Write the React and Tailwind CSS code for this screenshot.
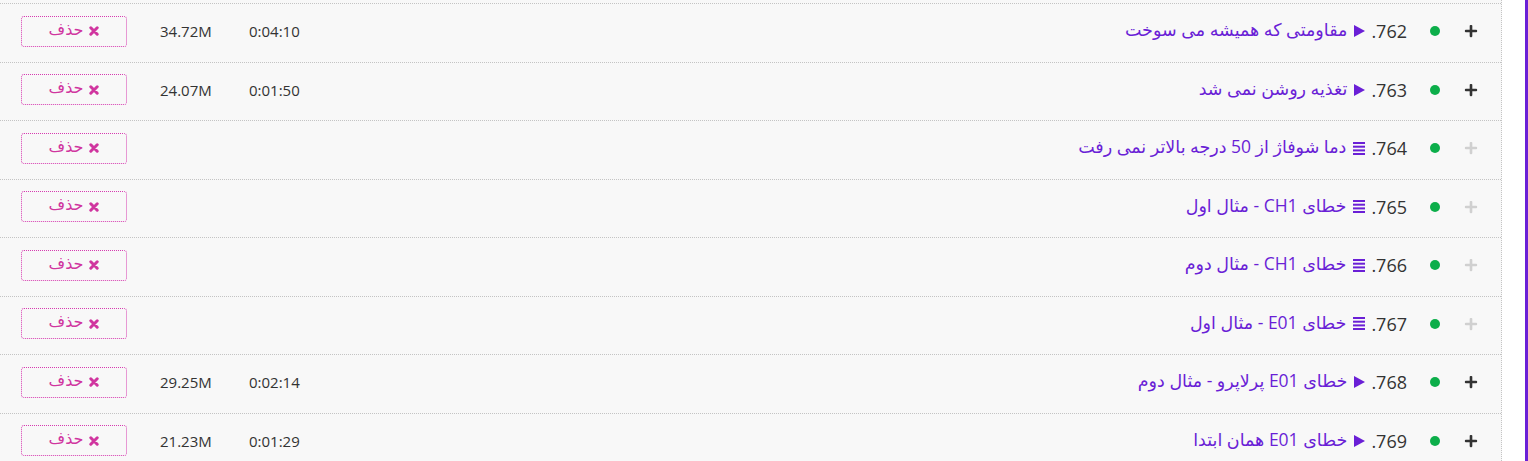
import React from "react";
import { FaPlus } from "react-icons/fa";

const rows = [
  { n: 762, title: "مقاومتی که همیشه می سوخت", type: "video", time: "0:04:10", size: "34.72M" },
  { n: 763, title: "تغذیه روشن نمی شد", type: "video", time: "0:01:50", size: "24.07M" },
  { n: 764, title: "دما شوفاژ از 50 درجه بالاتر نمی رفت", type: "text" },
  { n: 765, title: "خطای CH1 - مثال اول", type: "text" },
  { n: 766, title: "خطای CH1 - مثال دوم", type: "text" },
  { n: 767, title: "خطای E01 - مثال اول", type: "text" },
  { n: 768, title: "خطای E01 پرلاپرو - مثال دوم", type: "video", time: "0:02:14", size: "29.25M" },
  { n: 769, title: "خطای E01 همان ابتدا", type: "video", time: "0:01:29", size: "21.23M" },
];

const PlayIcon = () => (
  <svg width="11" height="12" viewBox="0 0 11 12" className="shrink-0 block">
    <polygon points="0,0 11,6 0,12" fill="#6a1fd6" />
  </svg>
);

const TextIcon = () => (
  <svg width="12" height="13" viewBox="0 0 12 13" className="shrink-0 block">
    <rect x="0" y="0" width="12" height="2" fill="#6a1fd6" />
    <rect x="0" y="3.7" width="12" height="2" fill="#6a1fd6" />
    <rect x="0" y="7.4" width="12" height="2" fill="#6a1fd6" />
    <rect x="0" y="11" width="12" height="2" fill="#6a1fd6" />
  </svg>
);

const XIcon = () => (
  <svg width="10" height="10" viewBox="0 0 10 10" className="shrink-0 block">
    <path d="M1.8 1.8 L8.2 8.2 M8.2 1.8 L1.8 8.2" stroke="#d0359f" strokeWidth="3" strokeLinecap="round" />
  </svg>
);

const Row = ({ item }) => (
  <div className="flex items-center h-[58.5px] border-t border-dotted border-[#c4c4c4] pr-[23px] pb-[3px]">
    {/* right side: expand, status, title */}
    <FaPlus className={`w-[14px] h-[14px] shrink-0 ${item.type === "video" ? "text-[#333]" : "text-[#d0d0d0]"}`} />
    <span className="w-[10px] h-[10px] rounded-full bg-[#0cae4a] mr-[24px] shrink-0" />
    <div className="flex items-center mr-[23px] gap-[4px]">
      <span className="text-[#333] text-[18px] leading-none">{item.n}.</span>
      <span className="mr-[2px]">{item.type === "video" ? <PlayIcon /> : <TextIcon />}</span>
      <span className="text-[#6a1fd6] text-[17.5px] leading-none whitespace-nowrap mr-[3px] -mt-[3px]">{item.title}</span>
    </div>

    <div className="flex-1" />

    {/* left side: meta + delete */}
    {item.time && (
      <span dir="ltr" className="text-[15px] text-[#333] w-[52px] ml-[35px]">{item.time}</span>
    )}
    {item.size && (
      <span dir="ltr" className="text-[15px] text-[#333] w-[54px]">{item.size}</span>
    )}
    <button className="w-[106px] h-[31px] mr-[33px] ml-[21px] border border-dotted border-[#d63ab0] rounded-[3px] flex items-center justify-center gap-[6px] text-[#d0359f] text-[16px]">
      <XIcon />
      <span className="-mt-[5px]">حذف</span>
    </button>
  </div>
);

export default function App() {
  return (
    <div className="w-[1528px] h-[461px] bg-white overflow-hidden flex" style={{ fontFamily: '"Open Sans", "DejaVu Sans", sans-serif' }}>
      <div dir="rtl" className="w-[1502px] h-full bg-[#f8f8f8] border-r border-dotted border-[#c4c4c4] pt-[3px]">
        {rows.map((item) => (
          <Row key={item.n} item={item} />
        ))}
      </div>
      <div className="flex-1 relative">
        <div className="absolute right-0 top-0 bottom-0 w-[3px] bg-[#6a1fd6]" />
      </div>
    </div>
  );
}
